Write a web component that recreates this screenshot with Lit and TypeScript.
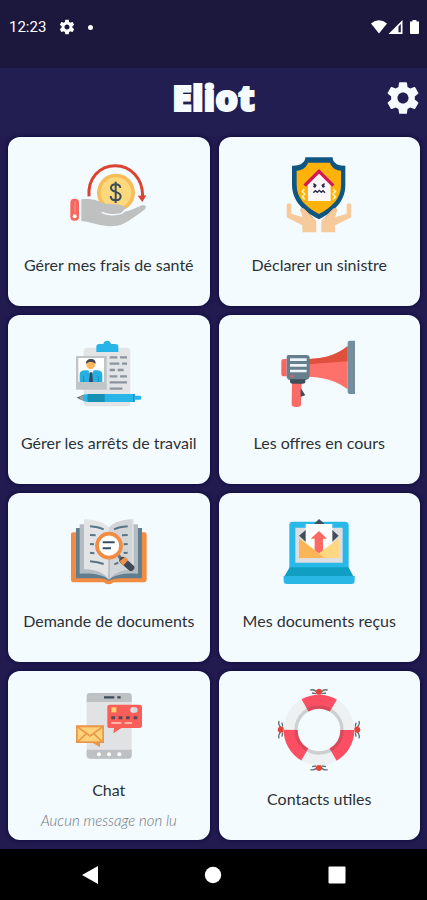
import { LitElement, html, css, svg, nothing, TemplateResult, SVGTemplateResult } from "lit";
import { customElement, property } from "lit/decorators.js";

const GEAR =
  "M19.43 12.98c.04-.32.07-.64.07-.98s-.03-.66-.07-.98l2.11-1.65c.19-.15.24-.42.12-.64l-2-3.46c-.12-.22-.39-.3-.61-.22l-2.49 1c-.52-.4-1.08-.73-1.69-.98l-.38-2.65C14.46 2.18 14.25 2 14 2h-4c-.25 0-.46.18-.49.42l-.38 2.65c-.61.25-1.17.59-1.69.98l-2.49-1c-.23-.09-.49 0-.61.22l-2 3.46c-.13.22-.07.49.12.64l2.11 1.65c-.04.32-.07.65-.07.98s.03.66.07.98l-2.11 1.65c-.19.15-.24.42-.12.64l2 3.46c.12.22.39.3.61.22l2.49-1c.52.4 1.08.73 1.69.98l.38 2.65c.03.24.24.42.49.42h4c.25 0 .46-.18.49-.42l.38-2.65c.61-.25 1.17-.59 1.69-.98l2.49 1c.23.09.49 0 .61-.22l2-3.46c.12-.22.07-.49-.12-.64l-2.11-1.65zM12 15.5c-1.93 0-3.5-1.57-3.5-3.5s1.57-3.5 3.5-3.5 3.5 1.57 3.5 3.5-1.57 3.5-3.5 3.5z";

interface Icon {
  viewBox: string;
  art: SVGTemplateResult;
}

const health: Icon = {
  viewBox: "201 63 252 264",
  art: svg`
    <circle cx="348" cy="188" r="57" fill="#f6bd58"/>
    <circle cx="348" cy="188" r="46" fill="#fdd87c"/>
    <path d="M361 174c-1-8-7-11-14-11-8 0-14 4-14 11 0 15 29 8 29 25 0 8-7 12-15 12s-15-4-15-13M347 155v64" fill="none" stroke="#3d4d5c" stroke-width="6"/>
    <path d="M267 199c-4-54 31-92 79-92 46 0 82 38 82 91" fill="none" stroke="#d9432f" stroke-width="9"/>
    <path d="M413 197l26-1-12 20z" fill="#d9432f"/>
    <path d="M244 208c22-3 41-1 55 7 10 5 20 6 35 7 20 0 34 3 44 11l-11 12c18 1 42-12 58-19 13-3 17 6 8 13-22 16-42 32-64 43-20 9-54 8-78 1-17-4-32-9-47-10z" fill="#bfc0c0"/>
    <path d="M305 247c17 9 42 9 58 4 8-3 10-7 13-12" fill="none" stroke="#f3faff" stroke-width="4"/>
    <rect x="211" y="206" width="26" height="66" rx="12" fill="#f8655f"/>
    <path d="M225 214v34" stroke="#fa8b83" stroke-width="4"/>
    <circle cx="224" cy="259" r="6" fill="#fff"/>`,
};

const claim: Icon = {
  viewBox: "190 63 252 264",
  art: svg`
    <path d="M275 82h82c0 14 10 26 38 25v58c0 48-31 78-79 103-49-25-80-55-81-103v-58c28 1 40-11 40-25z" fill="#105683"/>
    <path d="M283 98h66c5 15 16 22 33 24v43c0 40-25 65-66 87-41-22-67-47-67-87v-43c17-2 29-9 34-24z" fill="#ffb30a"/>
    <path d="M283 163l33-33 35 33v50h-68z" fill="#fbf7fa"/>
    <path d="M273 167l43-43 43 43" fill="none" stroke="#d31955" stroke-width="10"/>
    <path d="M299 161l9 6m25-6l-9 6" stroke="#292944" stroke-width="4"/>
    <circle cx="303" cy="169" r="4" fill="#292944"/><circle cx="329" cy="169" r="4" fill="#292944"/>
    <path d="M299 188l6-6 6 5 6-6 6 6 5-5 6 6" fill="none" stroke="#292944" stroke-width="4"/>
    <path d="M272 177l-6 8 7 7-7 8 7 8m86-31l6 8-7 7 7 8-7 8" fill="none" stroke="#fff2b2" stroke-width="5"/>
    <path d="M219 224c0-5 14-5 14 0v27l34 11-7-20c-1-9 8-9 13-4l33 33c3 3 2 15 2 36h-42v-21l-43-22c-4-2-4-8-4-40z" fill="#f7ca9b"/>
    <path d="M413 224c0-5-14-5-14 0v27l-34 11 5-20c1-9-8-9-13-4l-32 33c-3 3-2 15-2 36h41v-21l45-22c4-2 4-8 4-40z" fill="#f7ca9b"/>
    <path d="M260 241c5-9 11-5 16 1l22 22M370 241c-5-9-11-5-16 1l-20 22" fill="none" stroke="#e8b27b" stroke-width="3"/>`,
};

const leave: Icon = {
  viewBox: "201 57 252 264",
  art: svg`
    <rect x="251" y="113" width="140" height="176" rx="12" fill="#e2e4e6"/>
    <path d="M289 126v-16c0-7 5-8 13-8h8c2-12 20-13 23 0h11c8 0 11 2 11 9v15z" fill="#27b4e8"/>
    <path d="M329 142h23m8 0h21M329 161h29m8 0h15M329 180h16m8 0h18M329 199h23m8 0h21M329 217h52M329 236h38" stroke="#8c949e" stroke-width="7"/>
    <path d="M228 138h92v101h-92z" fill="#bfc5c7"/>
    <path d="M235 144h77v72h-77z" fill="#fff"/>
    <path d="M239 216v-22c0-10 7-13 19-13h31c11 0 18 4 18 14v21z" fill="#27afe0"/>
    <path d="M251 197v19m44-19v19" stroke="#168db8" stroke-width="3"/>
    <path d="M264 181h18l-9 13z" fill="#fff"/>
    <path d="M270 187h6l3 29h-12z" fill="#344860"/>
    <circle cx="272" cy="164" r="13" fill="#ffb657"/>
    <path d="M258 161c-1-8 6-14 15-14s15 6 14 14l-10-5h-10z" fill="#424858"/>
    <path d="M230 263l24-10v21z" fill="#545d69"/>
    <path d="M239 260l15-6v19l-15-5z" fill="#9c9fa4"/>
    <path d="M260 252h145v5h14c7 0 7 12 0 12h-14v7H260c-15-1-15-23 0-24z" fill="#28b6e8"/>
    <path d="M265 252h49v24h-49c-4-7-4-17 0-24z" fill="#1592b3"/>
    <path d="M401 252v24" stroke="#1592c4" stroke-width="4"/>`,
};

const offers: Icon = {
  viewBox: "190 57 252 264",
  art: svg`
    <path d="M235 218h29l-2 65c0 7-4 8-14 8s-14-2-14-8z" fill="#fa6b67"/>
    <path d="M261 234l14 22-14 4z" fill="#3e4d5b"/>
    <path d="M219 147h-8c-6 0-8 3-8 8v37c0 5 3 7 8 7h8z" fill="#f96561"/>
    <path d="M286 147c56-2 84-14 116-39v130c-27-20-55-35-116-38z" fill="#fd716a"/>
    <path d="M286 147c56-2 84-14 116-39v46l-116 9z" fill="#df513d"/>
    <path d="M402 98c0-5 3-6 9-6h13v160h-13c-6 0-9-2-9-7z" fill="#748e9d"/>
    <path d="M219 141c0-5 4-6 8-6h51c7 0 10 4 10 9v53c0 7-5 12-11 13h-48c-6 0-10-5-10-11z" fill="#667f8d"/>
    <path d="M229 208h46v8c0 4-3 5-8 5h-30c-6 0-8-3-8-7z" fill="#3e4d5b"/>
    <path d="M229 149h50m-50 17h50m-50 17h50" stroke="#eef5f8" stroke-width="8"/>
    <circle cx="235" cy="199" r="4" fill="#fa5b57"/>`,
};

const request: Icon = {
  viewBox: "201 57 252 264",
  art: svg`
    <path d="M213 139c0-4 3-6 7-6h213c5 0 7 3 7 7v134c0 6-3 9-8 9h-92c-4 8-24 8-28 0h-91c-5 0-8-3-8-8z" fill="#f28c43"/>
    <path d="M228 120h30l69 15 68-15h31v151h-66c-15 0-27 3-33 8-6-5-17-8-32-8h-67z" fill="#607e8e"/>
    <path d="M239 109h20l68 18 67-18h20v148c-39-2-70 3-87 18-18-15-49-20-88-18z" fill="#b3bcc2"/>
    <path d="M252 94c30 0 59 8 75 25 15-17 44-25 74-25v150c-32-1-60 9-74 30-16-21-44-31-75-30z" fill="#e3e4e5"/>
    <path d="M327 119c16-17 43-24 70-25v150c-32 0-56 9-70 30z" fill="#d2d5d7"/>
    <path d="M327 208v64" stroke="#a3aaaf" stroke-width="3"/>
    <path d="M270 115q25 2 41 9M383 115q-25 2-41 9M270 141l17 1M270 168l12 1M270 194l13 2M270 220q24 2 41 8M383 141l-17 1M383 168l-12 1M383 194l-12 1M355 224l-12 5" fill="none" stroke="#587584" stroke-width="6"/>
    <path d="M355 202l16 20" stroke="#687580" stroke-width="10"/>
    <path d="M368 217l25 22" stroke="#3f4c57" stroke-width="20" stroke-linecap="round"/>
    <path d="M359 219l18-13 8 10-16 17z" fill="#f19148"/>
    <circle cx="327" cy="173" r="36" fill="#fff" stroke="#f28c43" stroke-width="11"/>
    <path d="M308 163h36m-36 18h25" stroke="#345069" stroke-width="6"/>`,
};

const received: Icon = {
  viewBox: "190 57 252 264",
  art: svg`
    <path d="M227 111c0-7 4-10 10-10h157c7 0 11 4 11 10v131H227z" fill="#28b9e8"/>
    <path d="M245 119h142v105H245z" fill="#dedddf"/>
    <path d="M256 143l21-18v37zM375 143l-20-18v37zM301 108l15-15 17 15z" fill="#424d5c"/>
    <path d="M276 108h80v91h-80z" fill="#fff"/>
    <path d="M256 151l61 43 59-43v59H256z" fill="#fdd880"/>
    <path d="M256 151l76 59h-76z" fill="#fbb458"/>
    <path d="M316 129l24 23h-12v35l-12 9-13-9v-35h-12z" fill="#fa6964"/>
    <path d="M228 238h177l15 29-7 7H218l-7-7z" fill="#109fc2"/>
    <path d="M210 264h213v14c0 6-3 10-10 10H220c-7 0-10-4-10-10z" fill="#29b7e5"/>`,
};

const chat: Icon = {
  viewBox: "201 57 252 264",
  art: svg`
    <rect x="260" y="81" width="135" height="197" rx="10" fill="#e1e2e3"/>
    <path d="M260 108V91c0-7 4-10 10-10h115c7 0 10 4 10 10v17zM260 251h135v17c0 7-4 10-10 10H270c-7 0-10-4-10-10z" fill="#bec1c3"/>
    <path d="M312 94h31m9 0h10" stroke="#3e4c59" stroke-width="7"/>
    <circle cx="297" cy="265" r="6" fill="#fff"/><circle cx="327" cy="265" r="6" fill="#fff"/><circle cx="358" cy="265" r="6" fill="#fff"/>
    <path d="M330 116h89c5 0 7 3 7 7v55c0 5-3 8-7 8h-55l-24 16 2-16h-13c-5 0-7-3-7-7v-56c0-5 3-7 8-7z" fill="#f95e59"/>
    <path d="M334 124h15v15h-15z" fill="#ffd46f"/>
    <circle cx="399" cy="132" r="8" fill="#f7eff0"/><circle cx="405" cy="132" r="8" fill="#d4d9dc"/>
    <path d="M334 155h11m11 0h11m11 0h11m12 0h11" stroke="#584856" stroke-width="9"/>
    <path d="M334 171h30m10 0h22" stroke="#ffb4a9" stroke-width="6"/>
    <path d="M228 178h84v53h-12v13l-21-13h-51z" fill="#e99649"/>
    <path d="M233 184h74v42h-74z" fill="#fdd279"/>
    <path d="M231 182l39 28 39-28M232 228l27-25M308 228l-27-25" fill="none" stroke="#e99649" stroke-width="5"/>`,
};

const bob = svg`<path d="M-26-5q11-3 18 5M26-5q-11-3-18 5M-21 4l12 2M21 4l-12 2" fill="none" stroke="#5c6f73" stroke-width="4"/><path d="M-10-3q10-12 20 0l-2 10q-8 6-16 0z" fill="#e04438"/>`;

const contacts: Icon = {
  viewBox: "190 57 252 264",
  art: svg`
    <g transform="translate(316 77)">${bob}</g>
    <g transform="translate(201 191) rotate(-90)">${bob}</g>
    <g transform="translate(431 191) rotate(90)">${bob}</g>
    <g transform="translate(316 306) rotate(180)">${bob}</g>
    <g fill="none">
      <circle cx="316" cy="192" r="85" stroke="#eef1f1" stroke-width="42"/>
      <circle cx="316" cy="192" r="85" stroke="#fc4f63" stroke-width="42" stroke-dasharray="89.01 89.01"/>
      <circle cx="316" cy="192" r="69" stroke="#263238" stroke-opacity=".17" stroke-width="10"/>
    </g>`,
};

interface Entry {
  label: string;
  icon: Icon;
  note?: string;
}

const ENTRIES: Entry[] = [
  { label: "Gérer mes frais de santé", icon: health },
  { label: "Déclarer un sinistre", icon: claim },
  { label: "Gérer les arrêts de travail", icon: leave },
  { label: "Les offres en cours", icon: offers },
  { label: "Demande de documents", icon: request },
  { label: "Mes documents reçus", icon: received },
  { label: "Chat", icon: chat, note: "Aucun message non lu" },
  { label: "Contacts utiles", icon: contacts },
];

@customElement("menu-card")
export class MenuCard extends LitElement {
  @property({ attribute: false }) entry!: Entry;

  static styles = css`
    :host { display: grid; min-width: 0; }
    .card {
      display: flex;
      flex-direction: column;
      align-items: center;
      width: 100%;
      margin: 0;
      padding: 14px 4px 0;
      border: 0;
      border-radius: 12px;
      background: #f3fbff;
      box-shadow: 0 0 4px #09053a;
      color: #2c3135;
      font: 400 16px/24px Lato, "Liberation Sans", sans-serif;
      cursor: pointer;
    }
    .icon { display: block; width: 84px; height: 88px; flex: none; }
    .label { margin-top: 14px; }
    .noted .label { margin-top: 5px; }
    .note { margin-top: 6px; color: #6f767b; font-size: 15px; font-weight: 300; font-style: italic; }
  `;

  render(): TemplateResult {
    const { label, icon, note } = this.entry;
    return html`
      <button class="card ${note ? "noted" : ""}" type="button">
        <svg class="icon" viewBox=${icon.viewBox} aria-hidden="true">${icon.art}</svg>
        <span class="label">${label}</span>
        ${note ? html`<span class="note">${note}</span>` : nothing}
      </button>
    `;
  }
}

@customElement("app-root")
export class AppRoot extends LitElement {
  static styles = css`
    :host {
      display: flex;
      flex-direction: column;
      min-height: 100vh;
      background: #211b4f;
      font-family: Lato, "Liberation Sans", sans-serif;
    }
    button { margin: 0; padding: 0; border: 0; background: none; color: inherit; cursor: pointer; }
    svg { display: block; }
    .status {
      display: flex;
      align-items: center;
      height: 54px;
      padding: 0 7px 14px 9px;
      background: #1c173c;
      color: #fff;
      font: 400 15px/20px Roboto, "Liberation Sans", sans-serif;
    }
    .status-gear { width: 16px; height: 16px; margin-left: 13px; }
    .dot { width: 5px; height: 5px; margin-left: 13px; border-radius: 50%; background: #fff; }
    .signals { width: 50px; height: 18px; margin-left: auto; }
    .top {
      display: grid;
      grid-template-columns: 1fr auto 1fr;
      align-items: center;
      height: 60px;
      padding: 0 5px 8px;
      background: #231e52;
      color: #f5fbff;
    }
    .title {
      grid-column: 2;
      margin: 0;
      font: 800 36px/44px "Open Sans", Lato, sans-serif;
      -webkit-text-stroke: 2px currentColor;
    }
    .settings { justify-self: end; }
    .settings-gear { width: 38px; height: 38px; }
    .menu {
      display: grid;
      flex: 1;
      grid-template-columns: 1fr 1fr;
      grid-auto-rows: minmax(164px, 1fr);
      gap: 9px;
      padding: 1px 7px 9px 8px;
    }
    .system {
      display: flex;
      justify-content: space-around;
      align-items: center;
      height: 51px;
      padding: 0 28px;
      background: #000;
    }
    .system svg { width: 20px; height: 20px; }
  `;

  render(): TemplateResult {
    return html`
      <div class="status">
        <span>12:23</span>
        <svg class="status-gear" viewBox="1 1 22 22" fill="#fff" aria-hidden="true"><path d=${GEAR}/></svg>
        <span class="dot"></span>
        <svg class="signals" viewBox="0 0 50 18" fill="#fff" aria-hidden="true">
          <path d="M1 5.5Q9 -1 17 5.5L9 15.500z"/>
          <path fill-rule="evenodd" d="M32.500 2v14H18.500zM30.800 6v8.300h-2.300V8.500z"/>
          <path d="M40 3.500h2.500V2h4v1.500H49V15q0 1-1 1h-7q-1 0-1-1z"/>
        </svg>
      </div>
      <header class="top">
        <h1 class="title">Eliot</h1>
        <button class="settings" type="button" aria-label="Paramètres">
          <svg class="settings-gear" viewBox="0 0 24 24" fill="currentColor" aria-hidden="true"><path d=${GEAR}/></svg>
        </button>
      </header>
      <main class="menu">
        ${ENTRIES.map((entry) => html`<menu-card .entry=${entry}></menu-card>`)}
      </main>
      <nav class="system" aria-label="Système">
        <button type="button" aria-label="Retour">
          <svg viewBox="0 0 20 20" fill="#fff"><path d="M18 1v18L2 10z"/></svg>
        </button>
        <button type="button" aria-label="Accueil">
          <svg viewBox="0 0 20 20" fill="#fff"><circle cx="10" cy="10" r="8.200"/></svg>
        </button>
        <button type="button" aria-label="Applications récentes">
          <svg viewBox="0 0 20 20" fill="#fff"><rect x="1.500" y="1.500" width="17" height="17" rx="1"/></svg>
        </button>
      </nav>
    `;
  }
}
